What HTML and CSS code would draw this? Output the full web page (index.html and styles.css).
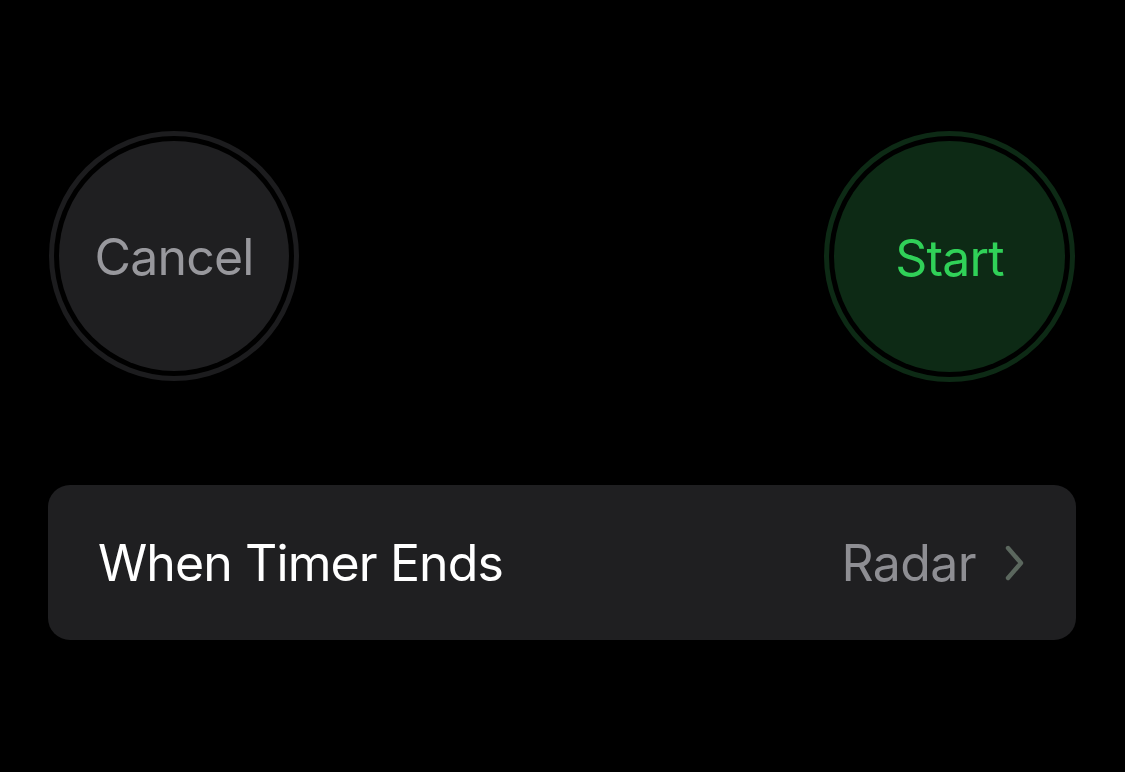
FILE: index.html
```html
<!DOCTYPE html>
<html lang="en">
<head>
    <meta charset="UTF-8">
    <meta name="viewport" content="width=device-width, initial-scale=1.0">
    <title>Timer</title>
    <link rel="stylesheet" href="styles.css">
</head>
<body>

<div class="timer-screen">
    <div class="timer-buttons">
        <button type="button" class="round-btn cancel">
            <span class="round-face">Cancel</span>
        </button>
        <button type="button" class="round-btn start">
            <span class="round-face">Start</span>
        </button>
    </div>

    <div class="settings-row">
        <span class="row-label">When Timer Ends</span>
        <span class="row-value">
            Radar
            <svg class="chevron" width="22" height="36" viewBox="0 0 22 36">
                <path d="M4 3 L17 18 L4 33" fill="none" stroke="currentColor" stroke-width="4.4" stroke-linecap="round" stroke-linejoin="round"/>
            </svg>
        </span>
    </div>
</div>

</body>
</html>
```

FILE: styles.css
```css
body {
    margin: 0;
    padding: 0;
    background-color: #000;
    font-family: Inter, "Noto Sans", sans-serif;
    height: 100vh;
    overflow: hidden;
}
.timer-screen {
    padding: 131px 49px 0 48px;
}
.timer-buttons {
    display: flex;
    justify-content: space-between;
    padding: 0 1px;
}
.round-btn {
    width: 250px;
    height: 250px;
    border-radius: 50%;
    border: 5px solid;
    padding: 5px;
    margin: 0;
    background-color: #000;
    box-sizing: border-box;
    font-family: inherit;
    cursor: pointer;
}
.round-face {
    display: flex;
    align-items: center;
    justify-content: center;
    width: 100%;
    height: 100%;
    border-radius: 50%;
    font-size: 50px;
    letter-spacing: -0.8px;
    padding-top: 2px;
    box-sizing: border-box;
}
.round-btn.cancel {
    border-color: #1c1c1e;
}
.round-btn.cancel .round-face {
    background-color: #1f1f21;
    color: #98989d;
}
.round-btn.start {
    border-color: #0d2a15;
    width: 251px;
    height: 251px;
}
.round-btn.start .round-face {
    background-color: #0d2a15;
    color: #30d158;
}
.settings-row {
    margin-top: 103px;
    height: 155px;
    background-color: #1f1f21;
    border-radius: 22px;
    display: flex;
    align-items: center;
    justify-content: space-between;
    padding: 0 50px 0 50px;
    box-sizing: border-box;
}
.row-label {
    color: #fff;
    font-size: 50px;
    letter-spacing: -0.9px;
}
.row-value {
    display: flex;
    align-items: center;
    gap: 28px;
    color: #8e8e93;
    font-size: 50px;
    letter-spacing: -0.6px;
}
.chevron {
    color: #5b675e;
}
```
